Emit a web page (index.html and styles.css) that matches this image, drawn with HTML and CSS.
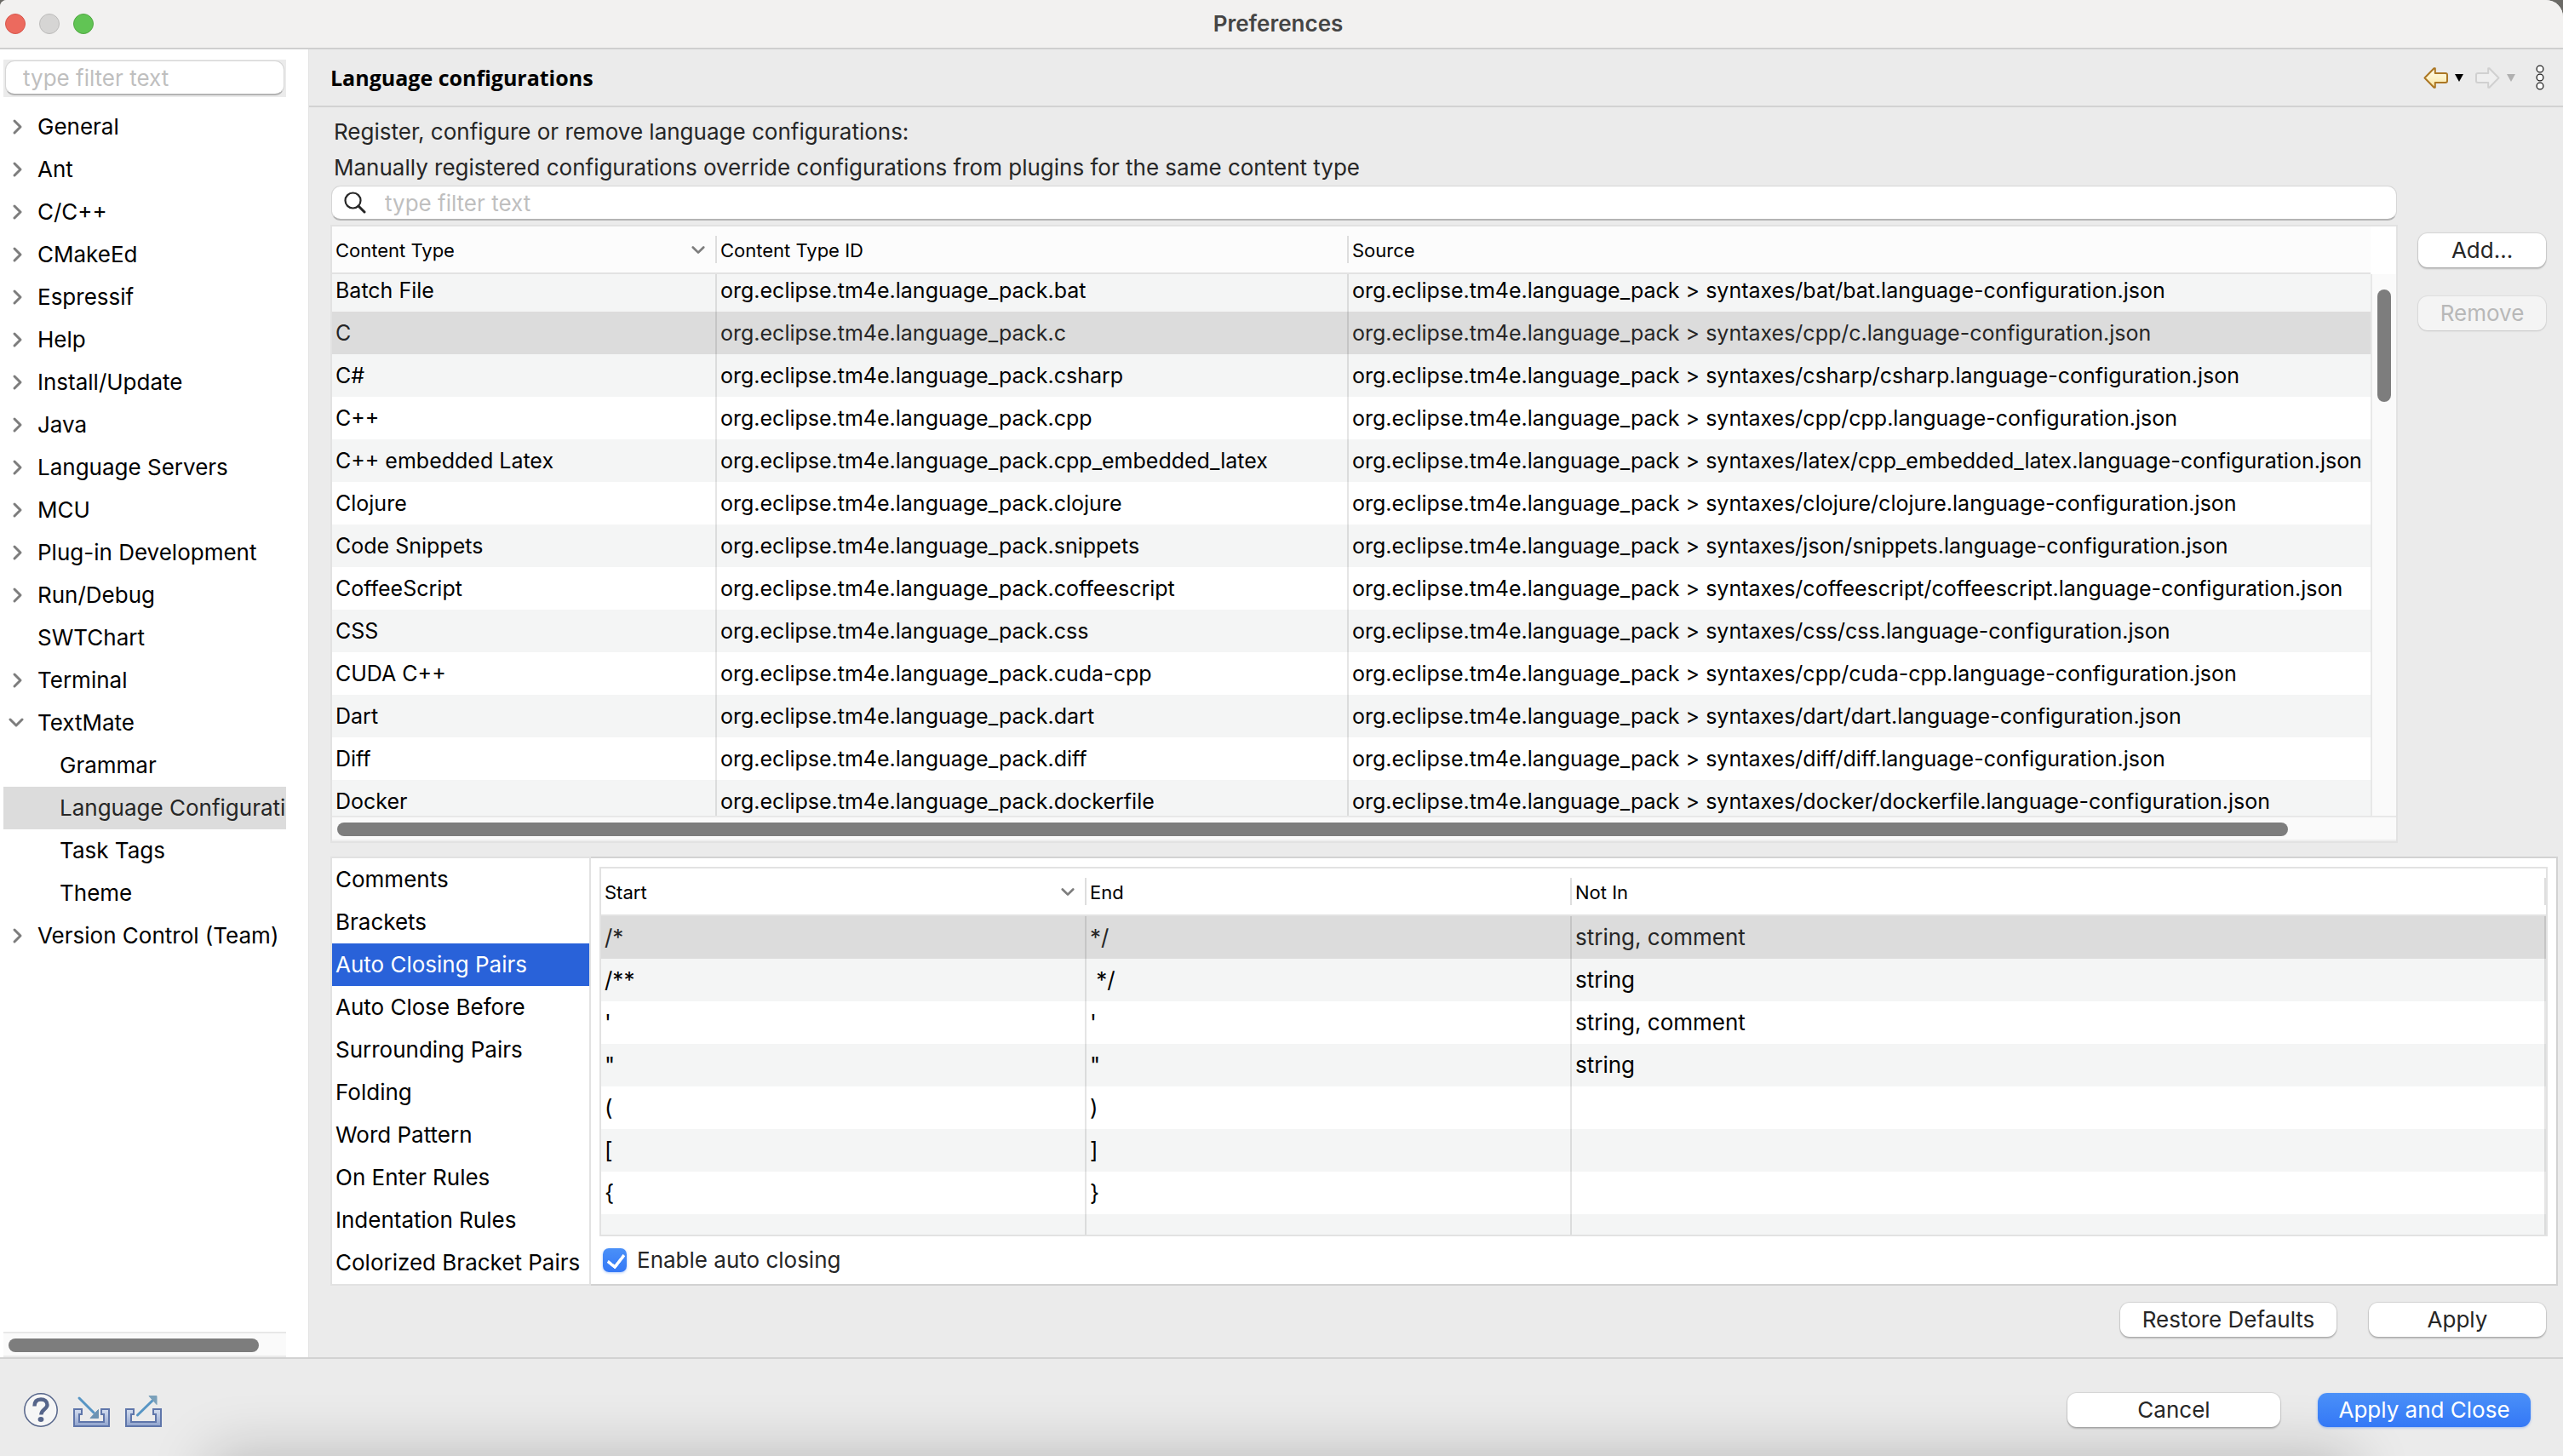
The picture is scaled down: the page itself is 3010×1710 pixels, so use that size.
FILE: index.html
```html
<!DOCTYPE html>
<html lang="en">
<head>
    <meta charset="UTF-8">
    <meta name="viewport" content="width=device-width, initial-scale=1.0">
    <title>Preferences</title>
    <link rel="stylesheet" href="styles.css">
</head>
<body>

    <!-- Chevron shared by the tree and the sorted column headers -->
    <svg class="symbols" aria-hidden="true">
        <symbol id="chevron-right" viewBox="0 0 18 20"><path d="M7 3l7 7-7 7" fill="none" stroke="#7d7d7d" stroke-width="3" stroke-linecap="round" stroke-linejoin="round"/></symbol>
        <symbol id="chevron-down" viewBox="0 0 18 20"><path d="M2 6l7 7 7-7" fill="none" stroke="#7d7d7d" stroke-width="3" stroke-linecap="round" stroke-linejoin="round"/></symbol>
    </svg>

    <div class="window">
        <header class="titlebar">
            <div class="lights">
                <button class="light close" aria-label="Close"></button>
                <button class="light minimize" aria-label="Minimize" disabled></button>
                <button class="light zoom" aria-label="Zoom"></button>
            </div>
            <h1>Preferences</h1>
        </header>

        <div class="content">
            <nav class="sidebar">
                <div class="filter">
                    <input type="text" placeholder="type filter text" aria-label="Filter preference pages">
                </div>
                <ul class="tree">
                    <li><a href="#"><svg class="arrow"><use href="#chevron-right"/></svg>General</a></li>
                    <li><a href="#"><svg class="arrow"><use href="#chevron-right"/></svg>Ant</a></li>
                    <li><a href="#"><svg class="arrow"><use href="#chevron-right"/></svg>C/C++</a></li>
                    <li><a href="#"><svg class="arrow"><use href="#chevron-right"/></svg>CMakeEd</a></li>
                    <li><a href="#"><svg class="arrow"><use href="#chevron-right"/></svg>Espressif</a></li>
                    <li><a href="#"><svg class="arrow"><use href="#chevron-right"/></svg>Help</a></li>
                    <li><a href="#"><svg class="arrow"><use href="#chevron-right"/></svg>Install/Update</a></li>
                    <li><a href="#"><svg class="arrow"><use href="#chevron-right"/></svg>Java</a></li>
                    <li><a href="#"><svg class="arrow"><use href="#chevron-right"/></svg>Language Servers</a></li>
                    <li><a href="#"><svg class="arrow"><use href="#chevron-right"/></svg>MCU</a></li>
                    <li><a href="#"><svg class="arrow"><use href="#chevron-right"/></svg>Plug-in Development</a></li>
                    <li><a href="#"><svg class="arrow"><use href="#chevron-right"/></svg>Run/Debug</a></li>
                    <li><a href="#"><svg class="arrow"></svg>SWTChart</a></li>
                    <li><a href="#"><svg class="arrow"><use href="#chevron-right"/></svg>Terminal</a></li>
                    <li>
                        <a href="#"><svg class="arrow"><use href="#chevron-down"/></svg>TextMate</a>
                        <ul>
                            <li><a href="#">Grammar</a></li>
                            <li><a href="#" class="selected" aria-current="page">Language Configurations</a></li>
                            <li><a href="#">Task Tags</a></li>
                            <li><a href="#">Theme</a></li>
                        </ul>
                    </li>
                    <li><a href="#"><svg class="arrow"><use href="#chevron-right"/></svg>Version Control (Team)</a></li>
                </ul>
                <div class="tree-scrollbar"><div class="thumb"></div></div>
            </nav>

            <main class="page">
                <div class="page-header">
                    <h2>Language configurations</h2>
                    <div class="history">
                        <button aria-label="Back">
                            <svg width="29" height="25" viewBox="0 0 29 25">
                                <defs><linearGradient id="gold" x1="0" y1="0" x2="0" y2="1"><stop offset="0" stop-color="#fffdf0"/><stop offset="1" stop-color="#fbe6a0"/></linearGradient></defs>
                                <path d="M1.5 12.5L12.5 1.2h1.3v5.8H26q2 0 2 2v7q0 2-2 2H13.800v5.800h-1.300z" fill="url(#gold)" stroke="#ab7623" stroke-width="2" stroke-linejoin="round"/>
                            </svg>
                        </button>
                        <button aria-label="Back history"><svg width="10" height="9" viewBox="0 0 10 9"><path d="M0 0h10L5 9z" fill="#000"/></svg></button>
                        <button aria-label="Forward" disabled>
                            <svg width="29" height="25" viewBox="0 0 29 25"><path d="M27.500 12.500L16.500 1.200h-1.300v5.800H3q-2 0-2 2v7q0 2 2 2h12.200v5.800h1.300z" fill="#efefef" stroke="#d0d0d0" stroke-width="2" stroke-linejoin="round"/></svg>
                        </button>
                        <button aria-label="Forward history" disabled><svg width="10" height="9" viewBox="0 0 10 9"><path d="M0 0h10L5 9z" fill="#b0b0b0"/></svg></button>
                        <button class="more" aria-label="Additional actions">
                            <svg width="10" height="30" viewBox="0 0 10 30"><g fill="#fff" stroke="#222" stroke-width="1.300"><circle cx="5" cy="5" r="3.900"/><circle cx="5" cy="15" r="3.900"/><circle cx="5" cy="25" r="3.900"/></g></svg>
                        </button>
                    </div>
                </div>

                <p class="intro">Register, configure or remove language configurations:<br>Manually registered configurations override configurations from plugins for the same content type</p>

                <div class="configurations">
                    <div class="configurations-list">
                        <label class="search">
                            <svg width="26" height="26" viewBox="0 0 26 26"><circle cx="10.500" cy="10.500" r="9" fill="none" stroke="#262626" stroke-width="2.200"/><path d="M17 17l7 7" stroke="#262626" stroke-width="3" stroke-linecap="round"/></svg>
                            <input type="text" placeholder="type filter text" aria-label="Filter language configurations">
                        </label>

                        <div class="table-frame">
                            <div class="table-scroller" id="configurations">
                                <table class="grid">
                                    <colgroup><col class="col-type"><col class="col-id"><col></colgroup>
                                    <thead>
                                        <tr>
                                            <th><div class="sorted">Content Type <svg class="sort"><use href="#chevron-down"/></svg></div></th>
                                            <th>Content Type ID</th>
                                            <th>Source</th>
                                        </tr>
                                    </thead>
                                    <tbody>
                                        <tr><td>Batch File</td><td>org.eclipse.tm4e.language_pack.bat</td><td>org.eclipse.tm4e.language_pack &gt; syntaxes/bat/bat.language-configuration.json</td></tr>
                                        <tr class="selected"><td>C</td><td>org.eclipse.tm4e.language_pack.c</td><td>org.eclipse.tm4e.language_pack &gt; syntaxes/cpp/c.language-configuration.json</td></tr>
                                        <tr><td>C#</td><td>org.eclipse.tm4e.language_pack.csharp</td><td>org.eclipse.tm4e.language_pack &gt; syntaxes/csharp/csharp.language-configuration.json</td></tr>
                                        <tr><td>C++</td><td>org.eclipse.tm4e.language_pack.cpp</td><td>org.eclipse.tm4e.language_pack &gt; syntaxes/cpp/cpp.language-configuration.json</td></tr>
                                        <tr><td>C++ embedded Latex</td><td>org.eclipse.tm4e.language_pack.cpp_embedded_latex</td><td>org.eclipse.tm4e.language_pack &gt; syntaxes/latex/cpp_embedded_latex.language-configuration.json</td></tr>
                                        <tr><td>Clojure</td><td>org.eclipse.tm4e.language_pack.clojure</td><td>org.eclipse.tm4e.language_pack &gt; syntaxes/clojure/clojure.language-configuration.json</td></tr>
                                        <tr><td>Code Snippets</td><td>org.eclipse.tm4e.language_pack.snippets</td><td>org.eclipse.tm4e.language_pack &gt; syntaxes/json/snippets.language-configuration.json</td></tr>
                                        <tr><td>CoffeeScript</td><td>org.eclipse.tm4e.language_pack.coffeescript</td><td>org.eclipse.tm4e.language_pack &gt; syntaxes/coffeescript/coffeescript.language-configuration.json</td></tr>
                                        <tr><td>CSS</td><td>org.eclipse.tm4e.language_pack.css</td><td>org.eclipse.tm4e.language_pack &gt; syntaxes/css/css.language-configuration.json</td></tr>
                                        <tr><td>CUDA C++</td><td>org.eclipse.tm4e.language_pack.cuda-cpp</td><td>org.eclipse.tm4e.language_pack &gt; syntaxes/cpp/cuda-cpp.language-configuration.json</td></tr>
                                        <tr><td>Dart</td><td>org.eclipse.tm4e.language_pack.dart</td><td>org.eclipse.tm4e.language_pack &gt; syntaxes/dart/dart.language-configuration.json</td></tr>
                                        <tr><td>Diff</td><td>org.eclipse.tm4e.language_pack.diff</td><td>org.eclipse.tm4e.language_pack &gt; syntaxes/diff/diff.language-configuration.json</td></tr>
                                        <tr><td>Docker</td><td>org.eclipse.tm4e.language_pack.dockerfile</td><td>org.eclipse.tm4e.language_pack &gt; syntaxes/docker/dockerfile.language-configuration.json</td></tr>
                                    </tbody>
                                </table>
                            </div>
                            <div class="scroll-y"><div class="track"><div class="thumb"></div></div></div>
                            <div class="scroll-x"><div class="thumb"></div></div>
                        </div>
                    </div>

                    <div class="side-buttons">
                        <button class="btn">Add...</button>
                        <button class="btn" disabled>Remove</button>
                    </div>
                </div>

                <section class="details">
                    <ul class="tabs">
                        <li><a href="#">Comments</a></li>
                        <li><a href="#">Brackets</a></li>
                        <li><a href="#" class="active">Auto Closing Pairs</a></li>
                        <li><a href="#">Auto Close Before</a></li>
                        <li><a href="#">Surrounding Pairs</a></li>
                        <li><a href="#">Folding</a></li>
                        <li><a href="#">Word Pattern</a></li>
                        <li><a href="#">On Enter Rules</a></li>
                        <li><a href="#">Indentation Rules</a></li>
                        <li><a href="#">Colorized Bracket Pairs</a></li>
                    </ul>
                    <div class="tab-panel">
                        <div class="pairs-frame">
                            <table class="grid pairs">
                                <colgroup><col class="col-pair"><col class="col-pair"><col></colgroup>
                                <thead>
                                    <tr>
                                        <th><div class="sorted">Start <svg class="sort"><use href="#chevron-down"/></svg></div></th>
                                        <th>End</th>
                                        <th>Not In</th>
                                    </tr>
                                </thead>
                                <tbody>
                                    <tr class="selected"><td>/*</td><td>*/</td><td>string, comment</td></tr>
                                    <tr><td>/**</td><td>&nbsp;*/</td><td>string</td></tr>
                                    <tr><td>'</td><td>'</td><td>string, comment</td></tr>
                                    <tr><td>"</td><td>"</td><td>string</td></tr>
                                    <tr><td>(</td><td>)</td><td></td></tr>
                                    <tr><td>[</td><td>]</td><td></td></tr>
                                    <tr><td>{</td><td>}</td><td></td></tr>
                                    <tr class="filler"><td></td><td></td><td></td></tr>
                                </tbody>
                            </table>
                        </div>
                        <div class="option">
                            <input type="checkbox" id="autoClosing" checked>
                            <label for="autoClosing">Enable auto closing</label>
                        </div>
                    </div>
                </section>

                <div class="page-buttons">
                    <button class="btn">Restore Defaults</button>
                    <button class="btn apply">Apply</button>
                </div>
            </main>
        </div>

        <footer class="footer">
            <div class="tools">
                <button aria-label="Help">
                    <svg width="40" height="40" viewBox="0 0 40 40">
                        <circle cx="20" cy="20" r="19.200" fill="#f6f6f6" stroke="#56658a" stroke-width="1.500"/>
                        <path d="M12.500 15.500C12.500 10 15.500 7.500 20 7.500S27.500 10 27.500 14C27.500 19 20.300 19 20.300 25.500" fill="none" stroke="#56658a" stroke-width="4.400"/>
                        <ellipse cx="20" cy="31" rx="3.400" ry="3" fill="#56658a"/>
                    </svg>
                </button>
                <button aria-label="Import">
                    <svg width="43" height="40" viewBox="0 0 43 40">
                        <defs><linearGradient id="tray" x1="0" y1="0" x2="0" y2="1"><stop offset="0" stop-color="#d6dff0"/><stop offset="1" stop-color="#8fa3cd"/></linearGradient></defs>
                        <path d="M1 19H10v6H7v9H36v-9h-3v-6h9V39H1z" fill="url(#tray)" stroke="#5f76aa" stroke-width="2"/>
                        <path d="M7 6L24 23" stroke="#5795c4" stroke-width="3" stroke-linecap="round"/>
                        <path d="M29.500 19.500V29.500H20z" fill="#6c93b3" stroke="#6c93b3" stroke-linejoin="round"/>
                    </svg>
                </button>
                <button aria-label="Export">
                    <svg width="43" height="40" viewBox="0 0 43 40">
                        <path d="M1 19H10v6H7v9H36v-9h-3v-6h9V39H1z" fill="url(#tray)" stroke="#5f76aa" stroke-width="2"/>
                        <path d="M14.500 26L32 9" stroke="#5795c4" stroke-width="3" stroke-linecap="round"/>
                        <path d="M28 3.500H37V13.500z" fill="#7aa0ba" stroke="#7aa0ba" stroke-linejoin="round"/>
                    </svg>
                </button>
            </div>
            <div class="dialog-buttons">
                <button class="btn">Cancel</button>
                <button class="btn primary">Apply and Close</button>
            </div>
        </footer>
    </div>

    <script>
        document.getElementById("configurations").scrollTop = 6;
    </script>

</body>
</html>
```

FILE: styles.css
```css
* {
    box-sizing: border-box;
}

body {
    margin: 0;
    background: #6b6a66;
    font-family: Inter, "Liberation Sans", sans-serif;
    font-size: 26px;
    line-height: 42px;
    color: #000;
}

h1, h2, p, ul {
    margin: 0;
    padding: 0;
}

ul {
    list-style: none;
}

a {
    color: inherit;
    text-decoration: none;
}

button, input {
    font: inherit;
    color: inherit;
}

button {
    padding: 0;
    border: none;
    background: none;
}

svg {
    display: block;
    flex: none;
}

.symbols {
    display: none;
}

.window {
    display: flex;
    flex-direction: column;
    height: 100vh;
    background: #ebebeb;
    border-radius: 8px 20px 0 0;
    overflow: hidden;
}

/* Title bar */
.titlebar {
    display: grid;
    grid-template-columns: 1fr auto 1fr;
    align-items: center;
    height: 58px;
    padding: 0 14px 0 6px;
    background: #f2f1f0;
    border-bottom: 2px solid #cfcfcf;
}

.titlebar h1 {
    font-size: 26px;
    font-weight: 600;
    color: #454545;
}

.lights {
    display: flex;
    gap: 16px;
}

.light {
    width: 24px;
    height: 24px;
    border-radius: 50%;
    border: 1px solid #d8564c;
    background: #ec6a5e;
}

.light.minimize {
    border-color: #bdbcbb;
    background: #d6d5d4;
}

.light.zoom {
    border-color: #52a843;
    background: #61c454;
}

.content {
    flex: 1;
    min-height: 0;
    display: grid;
    grid-template-columns: 362px minmax(0, 1fr);
    grid-template-rows: minmax(0, 1fr);
}

/* Tree of preference pages */
.sidebar {
    display: flex;
    flex-direction: column;
    padding: 12px 26px 0 4px;
    background: #fff;
    min-width: 0;
}

.filter {
    padding: 1px 2px 2px;
    background: #ebebeb;
}

.filter input {
    display: block;
    width: 100%;
    height: 41px;
    padding: 2px 20px 0;
}

.filter input, .search {
    border: 1px solid #d6d6d6;
    border-bottom: 2px solid #b4b4b4;
    border-radius: 11px;
    background: #fff;
}

input::placeholder {
    color: #bfbfbf;
    opacity: 1;
}

.tree {
    flex: 1;
    margin-top: 10px;
    overflow: hidden;
}

.tree a {
    display: flex;
    align-items: center;
    height: 50px;
    padding-left: 6px;
    white-space: nowrap;
}

.tree ul a {
    padding-left: 66px;
}

.arrow {
    width: 18px;
    height: 20px;
    margin-right: 16px;
}

.tree .selected {
    background: #dcdcdc;
    color: #262626;
}

.tree-scrollbar {
    height: 30px;
    padding: 6px;
    border-top: 2px solid #e8e8e8;
    border-bottom: 2px solid #ebebeb;
    background: #fafafa;
}

.thumb {
    height: 16px;
    border-radius: 8px;
    background: #7d7d7d;
}

.tree-scrollbar .thumb {
    width: 92%;
}

/* Preference page */
.page {
    display: flex;
    flex-direction: column;
    min-width: 0;
    border-left: 1px solid #e2e2e2;
}

.page-header {
    display: flex;
    align-items: center;
    justify-content: space-between;
    height: 68px;
    padding: 0 22px 0 25px;
    border-bottom: 2px solid #d2d2d2;
}

.page-header h2 {
    font-family: "Open Sans", sans-serif;
    font-size: 25px;
    font-weight: 700;
}

.history {
    display: flex;
    align-items: center;
    gap: 8px;
}

.history button:nth-child(3) {
    margin-left: 6px;
}

.history .more {
    margin-left: 16px;
}

.intro {
    padding: 8px 0 0 29px;
    color: #262626;
}

.configurations {
    flex: 1;
    min-height: 0;
    display: grid;
    grid-template-columns: minmax(0, 1fr) 150px;
    grid-template-rows: minmax(0, 1fr);
    gap: 24px;
    padding: 0 20px 0 25px;
}

.configurations-list {
    display: flex;
    flex-direction: column;
    min-width: 0;
    min-height: 0;
}

.search {
    display: flex;
    align-items: center;
    gap: 22px;
    flex: none;
    height: 41px;
    margin: 0 1px 5px;
    padding-left: 14px;
}

.search input {
    flex: 1;
    height: 38px;
    padding: 2px 0 0;
    border: none;
    background: none;
    outline: none;
}

.table-frame {
    flex: 1;
    min-height: 0;
    display: grid;
    grid-template-columns: minmax(0, 1fr) 30px;
    grid-template-rows: minmax(0, 1fr) 30px;
    border: 2px solid #e2e2e2;
    background: #fafafa;
}

.table-scroller {
    overflow: hidden;
    font-size: 25px;
}

.grid {
    width: 100%;
    table-layout: fixed;
    border-collapse: separate;
    border-spacing: 0;
    background: #fff;
}

.col-type {
    width: 452px;
}

.col-id {
    width: 742px;
}

.col-pair {
    width: 570px;
}

.grid th {
    position: sticky;
    top: 0;
    height: 56px;
    padding: 2px 4px 0;
    border-bottom: 2px solid #e2e2e2;
    background: #fff linear-gradient(#dedede, #dedede) no-repeat right center / 2px 32px;
    font-size: 22px;
    font-weight: 400;
    text-align: left;
    white-space: nowrap;
}

.table-scroller th {
    background-color: #fcfcfc;
}

.sorted {
    display: flex;
    align-items: center;
    justify-content: space-between;
    padding-right: 10px;
}

.sort {
    width: 16px;
    height: 18px;
}

.grid td {
    height: 50px;
    padding: 0 4px;
    border-right: 2px solid rgba(0, 0, 0, 0.1);
    overflow: hidden;
    white-space: nowrap;
}

.grid tr:nth-child(odd) td {
    background: #f4f5f5;
}

.pairs tr:nth-child(odd) td {
    background: #fff;
}

.pairs tr:nth-child(even) td {
    background: #f4f5f5;
}

.grid tr.selected td {
    background: #dcdcdc;
    color: #262626;
}

.table-scroller th:last-child {
    background-size: 0;
}

.table-scroller td:last-child {
    border-right: none;
}

.scroll-y {
    padding-top: 56px;
    background: #fff;
}

.scroll-y .track {
    height: 100%;
    padding: 18px 6px;
    border-left: 2px solid #e8e8e8;
    background: #fafafa;
}

.scroll-y .thumb {
    width: 16px;
    height: 132px;
}

.scroll-x {
    grid-column: 1 / -1;
    padding: 6px;
    border-top: 2px solid #e8e8e8;
    border-bottom: 2px solid #efefef;
}

.scroll-x .thumb {
    width: 95%;
}

.side-buttons {
    display: flex;
    flex-direction: column;
    gap: 34px;
    padding-top: 56px;
}

/* Push buttons */
.btn {
    height: 40px;
    border-radius: 11px;
    background: #fff;
    box-shadow: 0 0 1px 1px rgba(0, 0, 0, 0.1), 0 2px 2px rgba(0, 0, 0, 0.2);
    color: #262626;
    line-height: 38px;
}

.btn:disabled {
    background: #f4f4f4;
    color: #b8b8b8;
    box-shadow: 0 0 1px 1px rgba(0, 0, 0, 0.06), 0 1px 2px rgba(0, 0, 0, 0.1);
}

.btn.primary {
    background: linear-gradient(#4a90f8, #3478f6);
    box-shadow: 0 1px 3px rgba(52, 120, 246, 0.4);
    color: #fff;
}

/* Details of the selected configuration */
.details {
    display: grid;
    grid-template-columns: 306px minmax(0, 1fr);
    margin: 16px 6px 0 25px;
}

.tabs {
    border: 2px solid #e2e2e2;
    background: #fff;
}

.tabs a {
    display: block;
    height: 50px;
    padding-left: 4px;
    line-height: 50px;
    white-space: nowrap;
}

.tabs .active {
    background: #2962d9;
    color: #fff;
}

.tab-panel {
    display: flex;
    flex-direction: column;
    padding: 10px 10px 0;
    border: 2px solid #d2d2d2;
    border-left: none;
    background: #fff;
}

.pairs-frame {
    border: 2px solid #e2e2e2;
}

.grid .filler td {
    height: 24px;
}

.option {
    flex: 1;
    display: flex;
    align-items: center;
    gap: 12px;
    padding-left: 4px;
    color: #262626;
}

.option input {
    appearance: none;
    width: 28px;
    height: 28px;
    margin: 0;
    border-radius: 7px;
    background: linear-gradient(#4a90f8, #3478f6);
    box-shadow: 0 1px 3px rgba(52, 120, 246, 0.4);
}

.option input:checked::before {
    content: "";
    display: block;
    width: 9px;
    height: 16px;
    margin: 3px 0 0 9px;
    border: solid #fff;
    border-width: 0 4px 4px 0;
    border-radius: 2px;
    transform: rotate(38deg);
}

.page-buttons {
    display: flex;
    justify-content: flex-end;
    gap: 38px;
    padding: 20px 20px 24px;
}

.page-buttons .btn {
    width: 254px;
}

.page-buttons .apply {
    width: 208px;
}

/* Dialog footer */
.footer {
    position: relative;
    display: flex;
    align-items: flex-start;
    justify-content: space-between;
    height: 116px;
    padding: 40px 38px 0 28px;
    border-top: 2px solid #d2d2d2;
    overflow: hidden;
}

/* Soft shade that rises from the lower edge */
.footer::before {
    content: "";
    position: absolute;
    top: 100%;
    left: 250px;
    right: 250px;
    height: 80px;
    box-shadow: 0 0 70px 4px rgba(0, 0, 0, 0.2);
}

.tools, .dialog-buttons {
    position: relative;
    display: flex;
}

.tools {
    gap: 18px;
}

.dialog-buttons {
    gap: 44px;
}

.dialog-buttons .btn {
    width: 250px;
}
```
